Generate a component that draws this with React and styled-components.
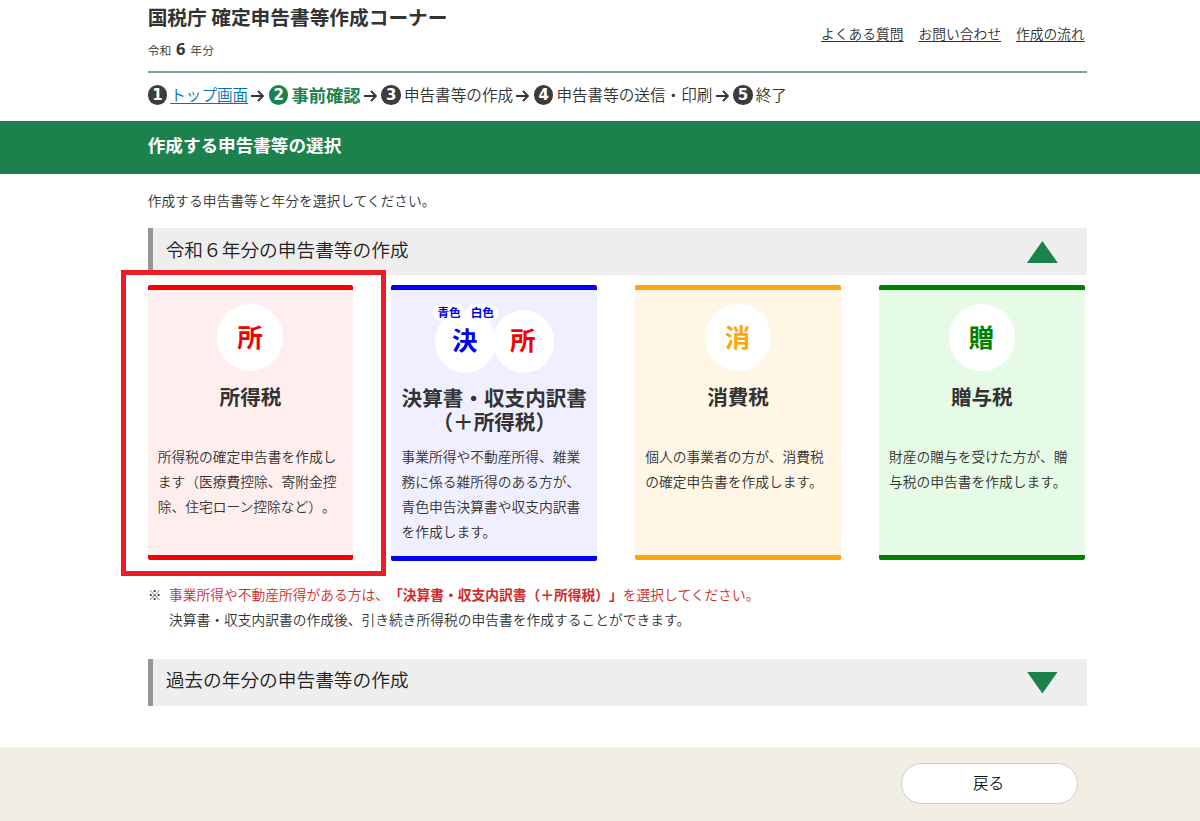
import React from 'react';
import styled, { createGlobalStyle } from 'styled-components';

const GlobalStyle = createGlobalStyle`
	* {
		box-sizing: border-box;
	}

	body {
		margin: 0;
		background: #fff;
		color: #333;
		font-family: 'Noto Sans CJK JP', sans-serif;
		font-size: 13.75px;
		font-weight: 350;
		line-height: 25px;
		text-spacing-trim: space-all;
		overflow: hidden;
	}

	h1, h2, h3, p {
		margin: 0;
	}

	b {
		font-weight: 700;
	}
`;

const Page = styled.div`
	display: flex;
	flex-direction: column;
	height: 821px;
`;

const Container = styled.div`
	width: 939.7px;
	margin-left: 147.7px;
`;

const Header = styled(Container)`
	display: flex;
	justify-content: space-between;
	height: 73px;
	border-bottom: 2px solid #6fab8c;
`;

const SiteTitle = styled.h1`
	padding-top: 3px;
	font-size: 19.7px;
	line-height: 28px;
	white-space: nowrap;
`;

const Year = styled.p`
	padding-top: 5px;
	font-size: 11.8px;
	line-height: 26px;

	b {
		margin: 0 4.8px;
		font-family: 'Open Sans', sans-serif;
		font-size: 16.5px;
	}
`;

const HelpLinks = styled.nav`
	display: flex;
	gap: 15px;
	padding: 21px 2.5px 0 0;
`;

const HelpLink = styled.a`
	color: #333;
	text-decoration: underline;
	text-underline-offset: 2px;
`;

const Steps = styled(Container)`
	display: flex;
	align-items: center;
	height: 48px;
	padding-bottom: 4px;
	font-size: 15.6px;
	white-space: nowrap;
`;

const StepNumber = styled.span`
	display: flex;
	align-items: center;
	justify-content: center;
	width: 19.5px;
	height: 19.5px;
	margin-right: 3px;
	border-radius: 50%;
	background: ${(props) => (props.$current ? '#1b824d' : '#3c3c3c')};
	color: #fff;
	font-family: 'DejaVu Sans', sans-serif;
	font-size: 15px;
	font-weight: 700;
	line-height: 19px;
`;

const StepText = styled.span`
	margin-top: -1px;
	color: ${(props) => (props.$current ? '#1b824d' : props.$link ? '#0071bc' : '#333')};
	font-size: ${(props) => (props.$current ? '17.3px' : '15.6px')};
	font-weight: ${(props) => (props.$current ? 700 : 350)};
	text-decoration: ${(props) => (props.$link ? 'underline' : 'none')};
	text-underline-offset: 2px;
`;

const StepArrow = styled.svg`
	width: 13px;
	height: 12px;
	margin: 2px 4.5px 0 3.3px;
	fill: none;
	stroke: #333;
	stroke-width: 1.9;
`;

const TitleBand = styled.div`
	height: 53px;
	background: #1b824d;
`;

const PageTitle = styled.h2`
	margin-left: 147.7px;
	color: #fff;
	font-size: 17.6px;
	line-height: 48px;
`;

const Lead = styled.p`
	padding-top: 14px;
	height: 54px;
`;

const SectionBar = styled.div`
	display: flex;
	align-items: center;
	justify-content: space-between;
	height: 47px;
	padding: 0 29.5px 7px 13px;
	border-left: 5px solid #969696;
	background: #eee;
	color: #222;
	font-size: 18.7px;
`;

const Triangle = styled.span`
	width: 31px;
	height: 22px;
	margin-top: 8px;
	background: #1b824d;
	clip-path: ${(props) => (props.$up ? 'polygon(50% 0, 100% 100%, 0 100%)' : 'polygon(0 0, 100% 0, 50% 100%)')};
`;

const Cards = styled.div`
	position: relative;
	display: grid;
	grid-template-columns: repeat(4, 205.6px);
	column-gap: 38.2px;
	height: 285px;
	padding-top: 9.5px;
`;

const Card = styled.article`
	height: ${(props) => (props.$tall ? '276px' : '275px')};
	padding: 14.5px 10px 0;
	border-top: 5px solid ${(props) => props.$color};
	border-bottom: 5px solid ${(props) => props.$color};
	border-radius: 2px;
	background: ${(props) => props.$background};
`;

const Marks = styled.div`
	position: relative;
	display: flex;
	justify-content: center;
	height: 67px;
	padding-top: ${(props) => (props.$pair ? '5.5px' : '0')};
`;

const Mark = styled.span`
	display: flex;
	align-items: center;
	justify-content: center;
	width: ${(props) => (props.$small ? '61px' : '66px')};
	height: ${(props) => (props.$small ? '63px' : '67px')};
	margin: 0 -1.5px;
	padding: 0 1px 5px 0;
	border-radius: 50%;
	background: #fff;
	color: ${(props) => props.$color};
	font-size: 25.5px;
	font-weight: 700;
`;

const FormLabels = styled.div`
	position: absolute;
	top: 0;
	left: 32px;
	display: flex;
	gap: 2px;
`;

const FormLabel = styled.span`
	height: 17px;
	padding: 0 4px;
	border-radius: 9px;
	background: #fff;
	color: #0000e6;
	font-size: 11.6px;
	font-weight: 700;
	line-height: 16px;
`;

const CardTitle = styled.h3`
	height: 60px;
	margin: 13px -5px 0;
	padding-top: ${(props) => (props.$tall ? '1px' : '0')};
	font-size: 20.6px;
	line-height: 24px;
	text-align: center;
	white-space: pre-line;
`;

// red frame drawn round the recommended card
const Highlight = styled.div`
	position: absolute;
	top: -5px;
	left: -27px;
	width: 265px;
	height: 306px;
	border: 5px solid #ed1c24;
	pointer-events: none;
`;

const Note = styled.div`
	display: flex;
	height: 98.5px;
	padding-top: 22px;
`;

const NoteMark = styled.span`
	width: 21.4px;
`;

const Warning = styled.p`
	color: #d22a2a;
`;

const Footer = styled.footer`
	display: flex;
	justify-content: flex-end;
	align-items: flex-start;
	flex: 1;
	margin-top: 41px;
	padding: 16px 122px 0 0;
	background: #f1efe4;
`;

const BackButton = styled.button`
	width: 177px;
	height: 41px;
	padding: 0 2px 2px 0;
	border: 1px solid #ccc;
	border-radius: 21px;
	background: #fff;
	color: #111;
	font-family: inherit;
	font-size: 15.6px;
	font-weight: 350;
`;

const steps = [
	{ text: 'トップ画面', link: true },
	{ text: '事前確認', current: true },
	{ text: '申告書等の作成' },
	{ text: '申告書等の送信・印刷' },
	{ text: '終了' }
];

const cards = [
	{
		title: '所得税',
		mark: '所',
		color: '#f50000',
		background: '#ffeeee',
		text: '所得税の確定申告書を作成します（医療費控除、寄附金控除、住宅ローン控除など）。'
	},
	{
		title: '決算書・収支内訳書\n（＋所得税）',
		pair: true,
		color: '#0000f5',
		background: '#f0efff',
		text: '事業所得や不動産所得、雑業務に係る雑所得のある方が、青色申告決算書や収支内訳書を作成します。'
	},
	{
		title: '消費税',
		mark: '消',
		color: '#ffa50a',
		background: '#fff6e6',
		text: '個人の事業者の方が、消費税の確定申告書を作成します。'
	},
	{
		title: '贈与税',
		mark: '贈',
		color: '#008000',
		background: '#e6fbe6',
		text: '財産の贈与を受けた方が、贈与税の申告書を作成します。'
	}
];

const Arrow = () => (
	<StepArrow viewBox="0 0 13 12">
		<path d="M0 6H12M7 1L12 6L7 11" />
	</StepArrow>
);

const TaxCard = ({ card }) => (
	<Card $color={card.color} $background={card.background} $tall={card.pair}>
		{card.pair ? (
			<Marks $pair>
				<Mark $small $color="#0000f5">決</Mark>
				<Mark $small $color="#f50000">所</Mark>
				<FormLabels>
					<FormLabel>青色</FormLabel>
					<FormLabel>白色</FormLabel>
				</FormLabels>
			</Marks>
		) : (
			<Marks>
				<Mark $color={card.color}>{card.mark}</Mark>
			</Marks>
		)}
		<CardTitle $tall={card.pair}>{card.title}</CardTitle>
		<p>{card.text}</p>
	</Card>
);

const App = () => (
	<Page lang="ja">
		<GlobalStyle />
		<Header as="header">
			<div>
				<SiteTitle>国税庁 確定申告書等作成コーナー</SiteTitle>
				<Year>令和<b>6</b>年分</Year>
			</div>
			<HelpLinks>
				<HelpLink>よくある質問</HelpLink>
				<HelpLink>お問い合わせ</HelpLink>
				<HelpLink>作成の流れ</HelpLink>
			</HelpLinks>
		</Header>
		<Steps>
			{steps.map((step, index) => (
				<React.Fragment key={step.text}>
					{index > 0 && <Arrow />}
					<StepNumber $current={step.current}>{index + 1}</StepNumber>
					<StepText $current={step.current} $link={step.link}>{step.text}</StepText>
				</React.Fragment>
			))}
		</Steps>
		<TitleBand>
			<PageTitle>作成する申告書等の選択</PageTitle>
		</TitleBand>
		<Container>
			<Lead>作成する申告書等と年分を選択してください。</Lead>
			<SectionBar>
				令和６年分の申告書等の作成
				<Triangle $up />
			</SectionBar>
			<Cards>
				{cards.map((card) => <TaxCard key={card.title} card={card} />)}
				<Highlight />
			</Cards>
			<Note>
				<NoteMark>※</NoteMark>
				<div>
					<Warning>
						事業所得や不動産所得がある方は、<b>「決算書・収支内訳書（＋所得税）」</b>を選択してください。
					</Warning>
					<p>決算書・収支内訳書の作成後、引き続き所得税の申告書を作成することができます。</p>
				</div>
			</Note>
			<SectionBar>
				過去の年分の申告書等の作成
				<Triangle />
			</SectionBar>
		</Container>
		<Footer>
			<BackButton>戻る</BackButton>
		</Footer>
	</Page>
);

export default App;
